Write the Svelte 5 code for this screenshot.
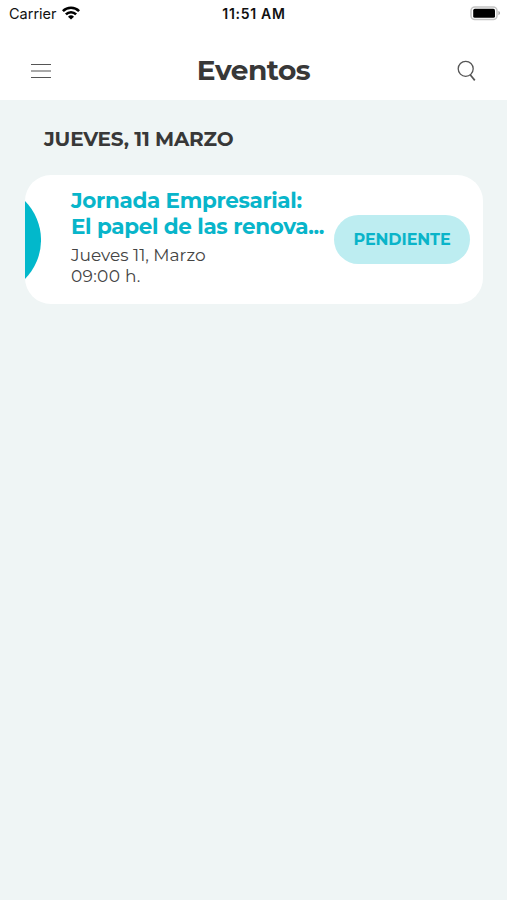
<script lang="ts">
	interface AgendaEvent {
		id: number;
		title: string[];
		date: string;
		time: string;
		status: string;
	}

	interface Day {
		label: string;
		events: AgendaEvent[];
	}

	const days: Day[] = [
		{
			label: 'Jueves, 11 Marzo',
			events: [
				{
					id: 1,
					title: ['Jornada Empresarial:', 'El papel de las renova...'],
					date: 'Jueves 11, Marzo',
					time: '09:00 h.',
					status: 'Pendiente'
				}
			]
		}
	];
</script>

<div class="screen">
	<header>
		<div class="status-bar">
			<div class="carrier">
				<span>Carrier</span>
				<svg width="18" height="14" viewBox="0 0 18 14" aria-hidden="true">
					<g fill="none" stroke="#000" stroke-width="2.6">
						<path d="M.9 5.1a11.5 11.5 0 0 1 16.2 0" />
						<path d="M3.9 8.4a7.2 7.2 0 0 1 10.2 0" />
					</g>
					<path d="M9 13.6 6 10.7a4.3 4.3 0 0 1 6 0z" />
				</svg>
			</div>
			<span class="clock">11:51 AM</span>
			<svg class="battery" width="31" height="15" viewBox="0 0 31 15" aria-hidden="true">
				<rect x="1" y="1" width="26" height="12.6" rx="3.8" fill="#fff" stroke="#c4c4c4" stroke-width="1.5" />
				<rect x="3.2" y="2.8" width="21.8" height="9" rx="1.6" />
				<path d="M28.4 4.9v4.4c1-.4 1.7-1.2 1.7-2.2s-.7-1.8-1.7-2.2z" fill="#aaa" />
			</svg>
		</div>

		<div class="nav">
			<button aria-label="Menú">
				<svg width="20" height="16" viewBox="0 0 20 16" aria-hidden="true">
					<path d="M0 1.5h20M0 8h20M0 14.5h20" stroke="#555" stroke-width="1.2" />
				</svg>
			</button>
			<h1>Eventos</h1>
			<button aria-label="Buscar">
				<svg width="20" height="22" viewBox="0 0 20 22" fill="none" stroke="#555" aria-hidden="true">
					<circle cx="9.7" cy="8.8" r="7.5" stroke-width="1.3" />
					<path d="m14.2 14.8 4.6 5.6" stroke-width="1.7" />
				</svg>
			</button>
		</div>
	</header>

	<main>
		{#each days as day (day.label)}
			<section>
				<h2>{day.label}</h2>
				{#each day.events as event (event.id)}
					<article>
						<svg class="accent" width="16" height="78" viewBox="0 0 16 78" aria-hidden="true">
							<path d="M0 0a55.5 55.5 0 0 1 0 78z" fill="#02b8cb" />
						</svg>
						<div class="details">
							<h3>
								{#each event.title as line}
									<span>{line}</span>
								{/each}
							</h3>
							<p>{event.date}</p>
							<p class="time">{event.time}</p>
						</div>
						<span class="badge">{event.status}</span>
					</article>
				{/each}
			</section>
		{/each}
	</main>
</div>

<style>
	:global(body) {
		margin: 0;
	}
	.screen {
		min-height: 900px;
		background: #eff5f5;
		color: #383838;
		font-family: Montserrat, Inter, 'Liberation Sans', sans-serif;
	}
	header {
		height: 100px;
		background: #fff;
	}
	.status-bar {
		display: grid;
		grid-template-columns: 1fr auto 1fr;
		align-items: center;
		height: 27px;
		padding: 0 6px 0 9px;
		color: #111;
		font-family: Inter, sans-serif;
		font-size: 14.5px;
	}
	.carrier {
		display: flex;
		align-items: center;
		gap: 5px;
	}
	.carrier svg {
		margin-bottom: 1px;
	}
	.clock {
		margin-right: 2px;
		font-weight: 600;
		font-size: 14px;
		letter-spacing: 0.7px;
	}
	.battery {
		justify-self: end;
	}
	.nav {
		display: flex;
		align-items: center;
		justify-content: space-between;
		height: 73px;
		padding: 15px 31px 0;
		box-sizing: border-box;
	}
	.nav button {
		display: flex;
		padding: 0;
		border: 0;
		background: none;
	}
	h1,
	h2,
	h3,
	p {
		margin: 0;
		white-space: nowrap;
	}
	h1 {
		padding-bottom: 2px;
		font-size: 28px;
		line-height: 34px;
		font-weight: 700;
		letter-spacing: -0.5px;
	}
	h2 {
		padding: 26px 0 23px 44px;
		font-size: 20px;
		line-height: 26px;
		font-weight: 700;
		letter-spacing: -0.2px;
		text-transform: uppercase;
	}
	article {
		display: flex;
		align-items: center;
		height: 129px;
		margin: 0 24px 0 25px;
		border-radius: 26px;
		background: #fff;
		overflow: hidden;
	}
	.accent {
		flex: none;
	}
	.details {
		flex: 1;
		min-width: 0;
		padding: 0 0 6px 30px;
	}
	h3 {
		margin-bottom: 6px;
		color: #08b5ca;
		font-size: 21.5px;
		line-height: 26px;
		font-weight: 700;
		letter-spacing: -0.34px;
	}
	h3 span {
		display: block;
	}
	p {
		color: #444;
		font-size: 17px;
		line-height: 21px;
	}
	.time {
		letter-spacing: 0.3px;
	}
	.badge {
		display: flex;
		align-items: center;
		justify-content: center;
		flex: none;
		width: 136px;
		height: 49px;
		margin-right: 13px;
		border-radius: 25px;
		background: #bdedf1;
		color: #0ab4c9;
		font-size: 16px;
		font-weight: 700;
		letter-spacing: -0.1px;
		text-transform: uppercase;
	}
</style>
